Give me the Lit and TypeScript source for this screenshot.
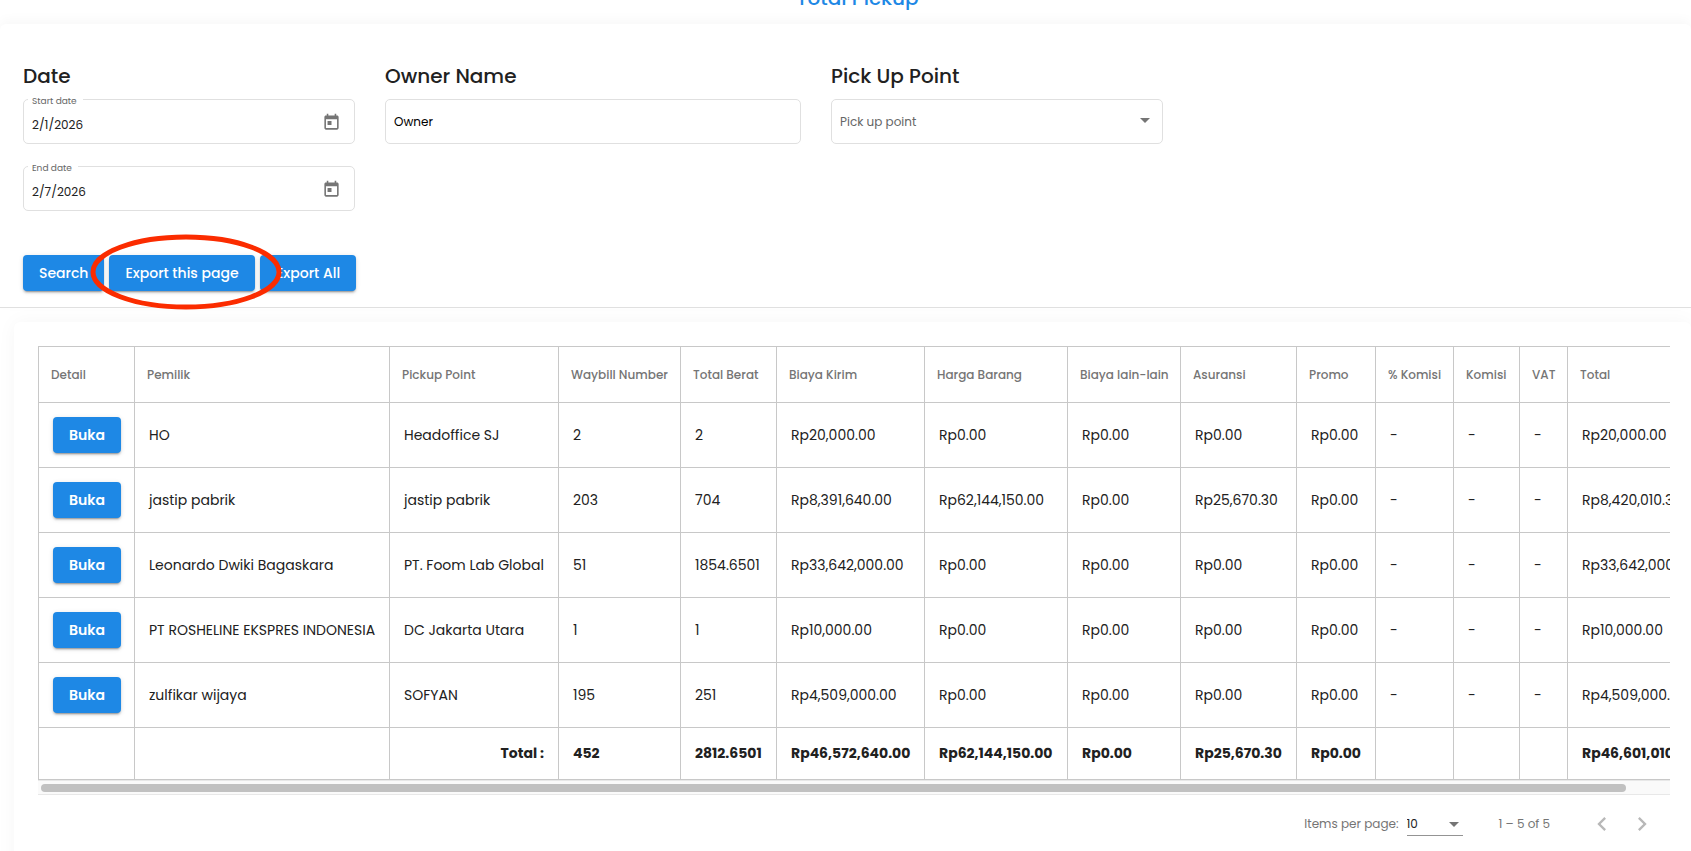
import { LitElement, html, css } from "lit";
import { customElement, state } from "lit/decorators.js";

interface Column {
  label: string;
  width: number;
  total: string;
}

const COLUMNS: Column[] = [
  { label: "Detail", width: 96, total: "" },
  { label: "Pemilik", width: 255, total: "" },
  { label: "Pickup Point", width: 169, total: "Total :" },
  { label: "Waybill Number", width: 122, total: "452" },
  { label: "Total Berat", width: 96, total: "2812.6501" },
  { label: "Biaya Kirim", width: 148, total: "Rp46,572,640.00" },
  { label: "Harga Barang", width: 143, total: "Rp62,144,150.00" },
  { label: "Biaya lain-lain", width: 113, total: "Rp0.00" },
  { label: "Asuransi", width: 116, total: "Rp25,670.30" },
  { label: "Promo", width: 79, total: "Rp0.00" },
  { label: "% Komisi", width: 78, total: "" },
  { label: "Komisi", width: 66, total: "" },
  { label: "VAT", width: 48, total: "" },
  { label: "Total", width: 147, total: "Rp46,601,010.30" },
];

const ROWS: string[][] = [
  ["HO", "Headoffice SJ", "2", "2", "Rp20,000.00", "Rp0.00", "Rp0.00", "Rp0.00", "Rp0.00", "-", "-", "-", "Rp20,000.00"],
  ["jastip pabrik", "jastip pabrik", "203", "704", "Rp8,391,640.00", "Rp62,144,150.00", "Rp0.00", "Rp25,670.30", "Rp0.00", "-", "-", "-", "Rp8,420,010.30"],
  ["Leonardo Dwiki Bagaskara", "PT. Foom Lab Global", "51", "1854.6501", "Rp33,642,000.00", "Rp0.00", "Rp0.00", "Rp0.00", "Rp0.00", "-", "-", "-", "Rp33,642,000.00"],
  ["PT ROSHELINE EKSPRES INDONESIA", "DC Jakarta Utara", "1", "1", "Rp10,000.00", "Rp0.00", "Rp0.00", "Rp0.00", "Rp0.00", "-", "-", "-", "Rp10,000.00"],
  ["zulfikar wijaya", "SOFYAN", "195", "251", "Rp4,509,000.00", "Rp0.00", "Rp0.00", "Rp0.00", "Rp0.00", "-", "-", "-", "Rp4,509,000.00"],
];

@customElement("app-root")
export class AppRoot extends LitElement {
  @state() private thumbSize = 97;
  @state() private thumbStart = 0;

  static styles = css`
    :host {
      display: block;
      height: 100vh;
      overflow: hidden;
      background: #fff;
      color: #212121;
      font-family: Poppins, Inter, "Open Sans", sans-serif;
      font-size: 14px;
      line-height: 20px;
    }
    * {
      box-sizing: border-box;
    }
    button,
    input,
    select {
      font: inherit;
      color: inherit;
      margin: 0;
    }
    .topbar {
      height: 24px;
      padding: 0 0 12px 24px;
      overflow: hidden;
      display: flex;
      align-items: flex-end;
      justify-content: center;
    }
    .topbar h1 {
      margin: 0;
      font-size: 20px;
      line-height: 28px;
      font-weight: 500;
      color: #1e88e5;
    }
    .filters {
      position: relative;
      padding: 38px 23px 16px;
      border-bottom: 1px solid #e0e0e0;
      border-radius: 6px 6px 0 0;
      background: #fff;
      box-shadow: 0 -4px 12px rgba(0, 0, 0, 0.03);
    }
    .fields {
      display: grid;
      grid-template-columns: 332fr 416fr 332fr 475fr;
      gap: 30px;
      align-items: start;
    }
    .group {
      display: flex;
      flex-direction: column;
    }
    .group h2 {
      margin: 0 0 9px;
      font-size: 20px;
      line-height: 28px;
      font-weight: 500;
    }
    .field {
      position: relative;
      height: 45px;
      margin-bottom: 22px;
    }
    .field input,
    .field select {
      width: 100%;
      height: 45px;
      padding: 0 8px;
      border: 1px solid #e0e0e0;
      border-radius: 5px;
      background: #fff;
      font-size: 12px;
      outline: none;
      appearance: none;
    }
    .field .owner {
      color: #000;
    }
    .field .dated {
      padding-top: 6px;
    }
    .field select {
      color: #666;
    }
    .floating {
      position: absolute;
      left: 5px;
      top: -4px;
      padding: 0 6px 0 4px;
      background: #fff;
      color: #666;
      font-size: 9px;
      line-height: 12px;
    }
    .picker {
      position: absolute;
      right: 14px;
      top: 14px;
      display: flex;
      padding: 0;
      border: 0;
      background: none;
      color: #757575;
    }
    .arrow {
      position: absolute;
      right: 13px;
      top: 19px;
      pointer-events: none;
    }
    .actions {
      display: flex;
      gap: 5px;
      margin-top: 22px;
    }
    .btn {
      height: 36px;
      padding: 0 16px;
      border: 0;
      border-radius: 4px;
      background: #1e88e5;
      color: #fff;
      font-weight: 600;
      white-space: nowrap;
      box-shadow: 0 3px 1px -2px rgba(0, 0, 0, 0.2), 0 2px 2px rgba(0, 0, 0, 0.14), 0 1px 5px rgba(0, 0, 0, 0.12);
    }
    .actions .btn {
      font-weight: 500;
    }
    .search {
      width: 81px;
    }
    .page {
      width: 146px;
    }
    .all {
      width: 96px;
    }
    .marked {
      position: relative;
      display: flex;
    }
    .ring {
      position: absolute;
      left: -19px;
      top: -22px;
      z-index: 1;
      pointer-events: none;
    }
    .card {
      margin: 14px 0 0 14px;
      padding: 24px 21px 64px 24px;
      border-radius: 6px;
      background: #fff;
      box-shadow: 0 0 20px rgba(0, 0, 0, 0.04);
    }
    .scroller {
      overflow-x: auto;
      scrollbar-width: none;
    }
    table {
      width: 100%;
      min-width: 1676px;
      table-layout: fixed;
      border-collapse: collapse;
    }
    th,
    td {
      border: 1px solid #c8c8c8;
      text-align: left;
      white-space: nowrap;
    }
    thead th {
      height: 56px;
      padding: 0 12px;
      color: #757575;
      font-size: 12px;
      font-weight: 500;
    }
    tbody td {
      height: 65px;
      padding: 0 14px;
    }
    tfoot td {
      height: 52px;
      padding: 0 14px 2px;
      font-weight: 700;
    }
    tfoot .caption {
      text-align: right;
    }
    .track {
      height: 15px;
      padding: 3px 0 4px 3px;
      border-top: 1px solid #e8e8e8;
      border-bottom: 1px solid #e8e8e8;
      background: #fafafa;
    }
    .thumb {
      height: 8px;
      border-radius: 4px;
      background: #c1c1c1;
    }
    .paginator {
      display: flex;
      align-items: center;
      justify-content: flex-end;
      height: 58px;
      padding-right: 8px;
      color: #757575;
      font-size: 12px;
    }
    .size {
      position: relative;
      width: 56px;
      margin: 0 36px 0 8px;
    }
    .size select {
      width: 100%;
      height: 24px;
      padding: 0;
      border: 0;
      border-bottom: 1px solid #949494;
      background: none;
      color: #212121;
      appearance: none;
      outline: none;
    }
    .size .arrow {
      right: 4px;
      top: 10px;
    }
    .nav {
      display: flex;
      align-items: center;
      justify-content: center;
      width: 40px;
      height: 40px;
      padding: 0;
      border: 0;
      background: none;
      color: #b8b8b8;
    }
    .range {
      margin-right: 32px;
    }
  `;

  firstUpdated() {
    this.syncScrollbar();
  }

  private syncScrollbar() {
    const el = this.renderRoot.querySelector(".scroller");
    if (!el) return;
    this.thumbSize = (el.clientWidth / el.scrollWidth) * 100;
    this.thumbStart = (el.scrollLeft / el.scrollWidth) * 100;
  }

  private arrow() {
    return html`<svg class="arrow" width="10" height="5" viewBox="0 0 10 5" aria-hidden="true">
      <path d="M0 0h10L5 5z" fill="#757575" />
    </svg>`;
  }

  private dateField(id: string, label: string, value: string) {
    return html`<div class="field">
      <input class="dated" id=${id} type="text" .value=${value} />
      <label class="floating" for=${id}>${label}</label>
      <button class="picker" type="button" aria-label="Open calendar">
        <svg width="19" height="19" viewBox="0 0 24 24" fill="currentColor">
          <path d="M19 3h-1V1h-2v2H8V1H6v2H5c-1.11 0-1.99.9-1.99 2L3 19c0 1.1.89 2 2 2h14c1.1 0 2-.9 2-2V5c0-1.1-.9-2-2-2zm0 16H5V8h14v11zM7 10h5v5H7z" />
        </svg>
      </button>
    </div>`;
  }

  render() {
    return html`
      <header class="topbar"><h1>Total Pickup</h1></header>
      <section class="filters">
        <div class="fields">
          <div class="group">
            <h2>Date</h2>
            ${this.dateField("start", "Start date", "2/1/2026")}
            ${this.dateField("end", "End date", "2/7/2026")}
          </div>
          <div class="group">
            <h2 id="owner-title">Owner Name</h2>
            <div class="field">
              <input class="owner" type="text" aria-labelledby="owner-title" .value=${"Owner"} />
            </div>
          </div>
          <div class="group">
            <h2 id="point-title">Pick Up Point</h2>
            <div class="field">
              <select aria-labelledby="point-title">
                <option>Pick up point</option>
              </select>
              ${this.arrow()}
            </div>
          </div>
        </div>
        <div class="actions">
          <button class="btn search" type="button">Search</button>
          <div class="marked">
            <button class="btn page" type="button">Export this page</button>
            <svg class="ring" width="192" height="78" viewBox="0 0 192 78" aria-hidden="true">
              <ellipse cx="96" cy="39" rx="93" ry="35" fill="none" stroke="#fb2c00" stroke-width="5" />
            </svg>
          </div>
          <button class="btn all" type="button">Export All</button>
        </div>
      </section>
      <section class="card">
        <div class="scroller" @scroll=${this.syncScrollbar}>
          <table>
            <colgroup>
              ${COLUMNS.map((c) => html`<col style="width:${c.width}px" />`)}
            </colgroup>
            <thead>
              <tr>
                ${COLUMNS.map((c) => html`<th scope="col">${c.label}</th>`)}
              </tr>
            </thead>
            <tbody>
              ${ROWS.map(
                (row) => html`<tr>
                  <td><button class="btn" type="button">Buka</button></td>
                  ${row.map((cell) => html`<td>${cell}</td>`)}
                </tr>`
              )}
            </tbody>
            <tfoot>
              <tr>
                ${COLUMNS.map((c, i) => html`<td class=${i === 2 ? "caption" : "sum"}>${c.total}</td>`)}
              </tr>
            </tfoot>
          </table>
        </div>
        <div class="track">
          <div class="thumb" style="width:${this.thumbSize}%;margin-left:${this.thumbStart}%"></div>
        </div>
        <div class="paginator">
          <label for="size">Items per page:</label>
          <div class="size">
            <select id="size">
              <option>10</option>
            </select>
            ${this.arrow()}
          </div>
          <span class="range">1 – 5 of 5</span>
          <button class="nav" type="button" aria-label="Previous page">
            <svg width="28" height="28" viewBox="0 0 24 24" fill="currentColor">
              <path d="M15.41 7.41L14 6l-6 6 6 6 1.41-1.41L10.83 12z" />
            </svg>
          </button>
          <button class="nav" type="button" aria-label="Next page">
            <svg width="28" height="28" viewBox="0 0 24 24" fill="currentColor">
              <path d="M10 6L8.59 7.41 13.17 12l-4.58 4.59L10 18l6-6z" />
            </svg>
          </button>
        </div>
      </section>
    `;
  }
}
